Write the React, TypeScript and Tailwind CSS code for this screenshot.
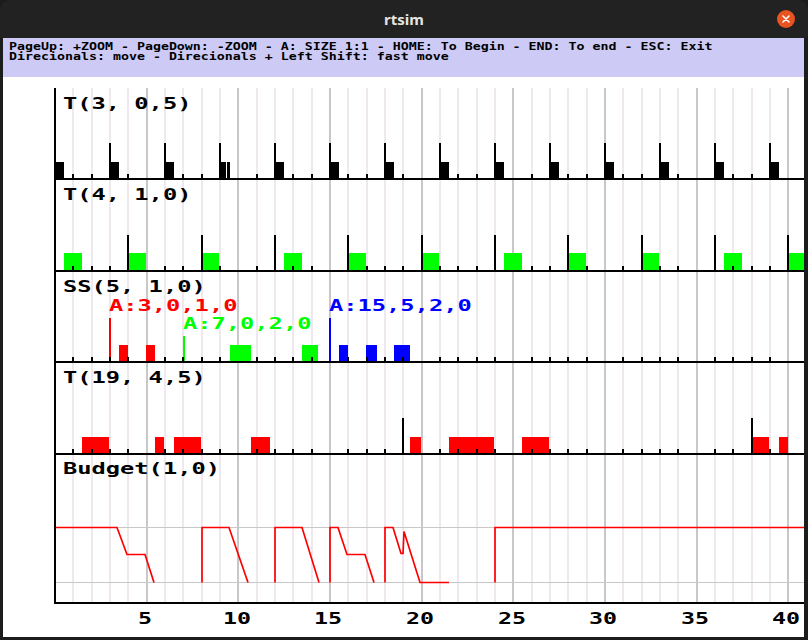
import React from "react";

// time axis: t=0 at x=55, one unit = 18.33px (page coordinates)
const X0 = 55;
const U = 18.3333;
const xt = (t: number) => X0 + U * t;
const UNITS = Array.from({ length: 41 }, (_, i) => i + 1);

const mono = "font-['DejaVu_Sans_Mono',monospace] font-bold";

type Span = [number, number];

const T3_BARS: Span[] = [
  [56, 64], [110, 119], [165, 174], [220, 226], [227, 230], [275, 284], [330, 339],
  [385, 394], [440, 449], [495, 504], [550, 559], [605, 614], [660, 669], [715, 724], [770, 779],
];
const T4_BARS: Span[] = [
  [64, 82], [128, 146], [201, 219], [284, 302], [348, 366], [421, 439],
  [504, 522], [568, 586], [641, 659], [724, 742], [788, 806],
];
const T19_BARS: Span[] = [
  [82, 109], [155, 164], [174, 201], [251, 270], [410, 421], [449, 494], [522, 549], [751, 769], [779, 788],
];

const BUDGET: string[] = [
  "56,527.5 117,527.5 127,554.5 145,554.5 154,582.5",
  "202,582.5 202,527.5 229,527.5 248,582.5",
  "275,582.5 275,527.5 302,527.5 319,582.5",
  "330,582.5 330,527.5 338,527.5 347,554.5 365,554.5 374,582.5",
  "385,582.5 385,527.5 393,527.5 401,553.5 403,553.5 404,531.5 420,582.5 449,582.5",
  "495,582.5 495,527.5 806,527.5",
];

function Chart({ top, h, ticks = true, children }: { top: number; h: number; ticks?: boolean; children?: React.ReactNode }) {
  return (
    <svg
      className="absolute left-0 top-0"
      width={748}
      height={h}
      viewBox={`56 ${top} 748 ${h}`}
      shapeRendering="crispEdges"
    >
      {UNITS.map((t) => (
        <rect key={t} x={xt(t) - 1} y={top} width={2} height={h} fill={t % 5 === 0 ? "#c8c8c8" : "#efe9ef"} />
      ))}
      {children}
      {ticks &&
        UNITS.filter((t) => t % 5 !== 0).map((t) => (
          <rect key={"tick" + t} x={xt(t) - 1} y={top + h - 4} width={2} height={4} fill="#000" />
        ))}
    </svg>
  );
}

function Bars({ spans, y, h, fill }: { spans: Span[]; y: number; h: number; fill: string }) {
  return (
    <>
      {spans.map(([a, b], i) => (
        <rect key={i} x={a} y={y} width={b - a} height={h} fill={fill} />
      ))}
    </>
  );
}

function Arrivals({ xs, y1, y2, fill = "#000" }: { xs: number[]; y1: number; y2: number; fill?: string }) {
  return (
    <>
      {xs.map((x, i) => (
        <rect key={i} x={x - 1} y={y1} width={2} height={y2 - y1} fill={fill} />
      ))}
    </>
  );
}

function Label({ text, className }: { text: string; className: string }) {
  return (
    <div className={`relative pl-[7px] ${className}`}>
      <span className={`block w-fit origin-left scale-x-[1.58] text-[15px] leading-[15px] text-black ${mono}`}>
        {text}
      </span>
    </div>
  );
}

export default function App() {
  return (
    <div className="w-[808px] h-[640px] overflow-hidden bg-[#1c1c1c]">
      {/* title bar */}
      <div className="relative flex h-[38px] items-center justify-center rounded-t-[10px] bg-[#222222]">
        <span className="font-['Noto_Sans',sans-serif] text-[15px] font-bold text-[#e4e4e4]">rtsim</span>
        <div className="absolute left-[777px] top-[10px] flex h-[18px] w-[18px] items-center justify-center rounded-full bg-[#e95420]">
          <svg width="8" height="8" viewBox="0 0 8 8">
            <path d="M1 1 L7 7 M7 1 L1 7" stroke="#fff" strokeWidth="1.6" strokeLinecap="round" />
          </svg>
        </div>
      </div>

      <div className="mx-[3px] flex h-[599px] w-[801px] flex-col bg-white">
        {/* key help */}
        <div className="h-[39px] shrink-0 bg-[#cdcbf6] pl-[6px] pt-[4px]">
          <div className={`origin-left scale-x-[1.384] whitespace-nowrap text-[9.6px] leading-[10px] text-black ${mono}`}>
            PageUp: +ZOOM - PageDown: -ZOOM - A: SIZE 1:1 - HOME: To Begin - END: To end - ESC: Exit
          </div>
          <div className={`origin-left scale-x-[1.384] whitespace-nowrap text-[9.6px] leading-[10px] text-black ${mono}`}>
            Direcionals: move - Direcionals + Left Shift: fast move
          </div>
        </div>

        <div className="ml-[51px] mt-[11px] w-[750px]">
          <div className="border-l-2 border-black">
            {/* T(3, 0,5) */}
            <div className="relative h-[92px] border-b-2 border-black">
              <Chart top={88} h={90}>
                <Bars spans={T3_BARS} y={162} h={16} fill="#000" />
                <Arrivals xs={Array.from({ length: 13 }, (_, k) => xt(3 * (k + 1)))} y1={143} y2={178} />
              </Chart>
              <Label text="T(3, 0,5)" className="pt-[9px]" />
            </div>

            {/* T(4, 1,0) */}
            <div className="relative h-[92px] border-b-2 border-black">
              <Chart top={180} h={90}>
                <Bars spans={T4_BARS} y={253} h={17} fill="#00ff00" />
                <Arrivals xs={Array.from({ length: 10 }, (_, k) => xt(4 * (k + 1)))} y1={235} y2={270} />
              </Chart>
              <Label text="T(4, 1,0)" className="pt-[8px]" />
            </div>

            {/* SS(5, 1,0) */}
            <div className="relative h-[91px] border-b-2 border-black">
              <Chart top={272} h={89}>
                <Arrivals xs={[110]} y1={318} y2={361} fill="#ff0000" />
                <Arrivals xs={[184]} y1={336} y2={361} fill="#00ff00" />
                <Arrivals xs={[330]} y1={318} y2={361} fill="#0000ff" />
                <Bars spans={[[119, 128], [146, 155]]} y={345} h={16} fill="#ff0000" />
                <Bars spans={[[230, 251], [302, 318]]} y={345} h={16} fill="#00ff00" />
                <Bars spans={[[339, 348], [366, 377], [394, 410]]} y={345} h={16} fill="#0000ff" />
              </Chart>
              <Label text="SS(5, 1,0)" className="pt-[8px]" />
              <span className={`absolute left-[53px] top-[27px] origin-left scale-x-[1.58] text-[15px] leading-[15px] text-[#ff0000] ${mono}`}>
                A:3,0,1,0
              </span>
              <span className={`absolute left-[127px] top-[45px] origin-left scale-x-[1.58] text-[15px] leading-[15px] text-[#00ff00] ${mono}`}>
                A:7,0,2,0
              </span>
              <span className={`absolute left-[273px] top-[27px] origin-left scale-x-[1.58] text-[15px] leading-[15px] text-[#0000ff] ${mono}`}>
                A:15,5,2,0
              </span>
            </div>

            {/* T(19, 4,5) */}
            <div className="relative h-[92px] border-b-2 border-black">
              <Chart top={363} h={90}>
                <Bars spans={T19_BARS} y={437} h={16} fill="#ff0000" />
                <Arrivals xs={[xt(19), xt(38)]} y1={418} y2={453} />
              </Chart>
              <Label text="T(19, 4,5)" className="pt-[8px]" />
            </div>

            {/* Budget(1,0) */}
            <div className="relative h-[149px] border-b-2 border-black">
              <Chart top={455} h={147} ticks={false}>
                <rect x={56} y={527} width={748} height={1} fill="#c8c8c8" />
                <rect x={56} y={582} width={748} height={1} fill="#c8c8c8" />
                {BUDGET.map((pts, i) => (
                  <polyline key={i} points={pts} fill="none" stroke="#ff0000" strokeWidth={1.7} shapeRendering="auto" />
                ))}
              </Chart>
              <Label text="Budget(1,0)" className="pt-[7px]" />
            </div>
          </div>

          {/* time axis */}
          <div className="flex pl-[45px] pt-[6px]">
            {[5, 10, 15, 20, 25, 30, 35, 40].map((n) => (
              <div key={n} className="flex w-[91.67px] shrink-0 justify-center">
                <span className={`block scale-x-[1.41] text-[16.5px] leading-[17px] text-black ${mono}`}>{n}</span>
              </div>
            ))}
          </div>
        </div>
      </div>
    </div>
  );
}
